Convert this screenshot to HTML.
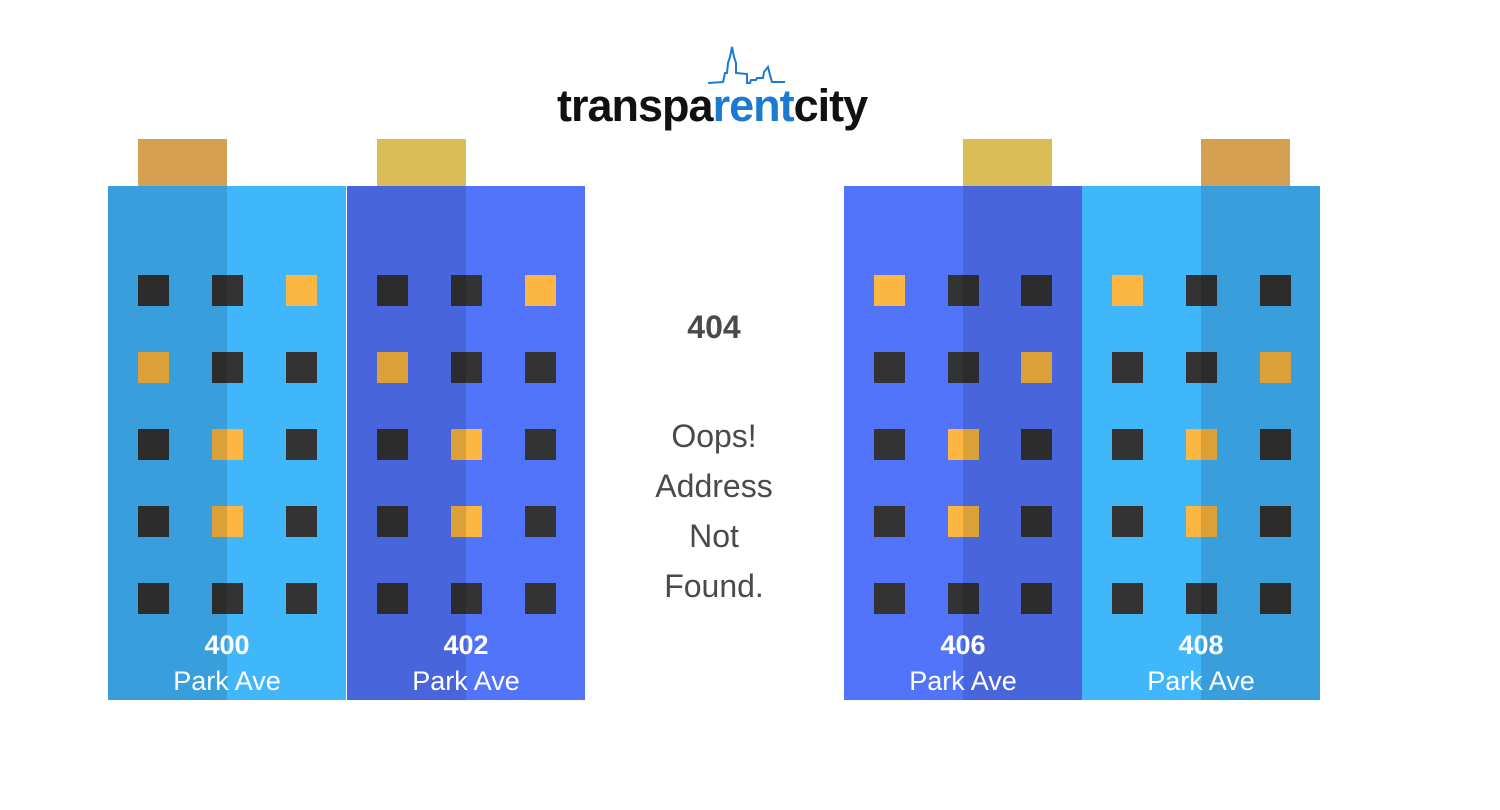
<!DOCTYPE html>
<html><head><meta charset="utf-8"><style>
*{margin:0;padding:0;box-sizing:border-box}
body{width:1500px;height:810px;background:#fff;position:relative;overflow:hidden;font-family:"Liberation Sans",sans-serif}
.b{position:absolute;top:186px;width:238px;height:514px}
.roof{position:absolute;top:139px;width:89px;height:47px}
.w{position:absolute;width:31px;height:31px;background:#333}
.y{background:#fbb741}
.sh{position:absolute;top:0;width:119px;height:514px;background:rgba(0,0,0,.12)}
.lab{position:absolute;left:0;width:238px;text-align:center;color:#fff}
.n{top:444px;font-size:27px;font-weight:bold}
.p{top:480px;font-size:27px}
.lt{background:#40b6fb}.bl{background:#5274fa}
.c{position:absolute;left:600px;width:228px;text-align:center;color:#4a4a4a;font-size:32px}
</style></head><body>
<div style="position:absolute;left:557px;top:80px;font-size:45px;font-weight:bold;letter-spacing:-1px;color:#111">transpa<span style="color:#1c7ad0">rent</span>city</div>
<svg style="position:absolute;left:700px;top:40px" width="90" height="50" viewBox="0 0 90 50"><path d="M8 43 L23 42 L25 33 L27 33 L28 23 L30 17 L32 7 L34 17 L36 23 L36 33 L47 34 L47 43 L50 43 L51 40 L56 40 L57 38 L63 38 L64 32 L68 27 L70 35 L72 42 L85 42" fill="none" stroke="#1c7ad0" stroke-width="2"/></svg>

<div class="roof" style="left:138px;background:#d6a052"></div>
<div class="roof" style="left:377px;background:#d8be55"></div>
<div class="roof" style="left:963px;background:#d8be55"></div>
<div class="roof" style="left:1201px;background:#d6a052"></div>

<div class="b lt" style="left:108px">
<div class="w" style="left:30px;top:89px"></div><div class="w" style="left:104px;top:89px"></div><div class="w y" style="left:178px;top:89px"></div>
<div class="w y" style="left:30px;top:166px"></div><div class="w" style="left:104px;top:166px"></div><div class="w" style="left:178px;top:166px"></div>
<div class="w" style="left:30px;top:243px"></div><div class="w y" style="left:104px;top:243px"></div><div class="w" style="left:178px;top:243px"></div>
<div class="w" style="left:30px;top:320px"></div><div class="w y" style="left:104px;top:320px"></div><div class="w" style="left:178px;top:320px"></div>
<div class="w" style="left:30px;top:397px"></div><div class="w" style="left:104px;top:397px"></div><div class="w" style="left:178px;top:397px"></div>
<div class="sh" style="left:0"></div>
<div class="lab n">400</div><div class="lab p">Park Ave</div>
</div>

<div class="b bl" style="left:347px">
<div class="w" style="left:30px;top:89px"></div><div class="w" style="left:104px;top:89px"></div><div class="w y" style="left:178px;top:89px"></div>
<div class="w y" style="left:30px;top:166px"></div><div class="w" style="left:104px;top:166px"></div><div class="w" style="left:178px;top:166px"></div>
<div class="w" style="left:30px;top:243px"></div><div class="w y" style="left:104px;top:243px"></div><div class="w" style="left:178px;top:243px"></div>
<div class="w" style="left:30px;top:320px"></div><div class="w y" style="left:104px;top:320px"></div><div class="w" style="left:178px;top:320px"></div>
<div class="w" style="left:30px;top:397px"></div><div class="w" style="left:104px;top:397px"></div><div class="w" style="left:178px;top:397px"></div>
<div class="sh" style="left:0"></div>
<div class="lab n">402</div><div class="lab p">Park Ave</div>
</div>

<div class="b bl" style="left:844px">
<div class="w y" style="left:30px;top:89px"></div><div class="w" style="left:104px;top:89px"></div><div class="w" style="left:177px;top:89px"></div>
<div class="w" style="left:30px;top:166px"></div><div class="w" style="left:104px;top:166px"></div><div class="w y" style="left:177px;top:166px"></div>
<div class="w" style="left:30px;top:243px"></div><div class="w y" style="left:104px;top:243px"></div><div class="w" style="left:177px;top:243px"></div>
<div class="w" style="left:30px;top:320px"></div><div class="w y" style="left:104px;top:320px"></div><div class="w" style="left:177px;top:320px"></div>
<div class="w" style="left:30px;top:397px"></div><div class="w" style="left:104px;top:397px"></div><div class="w" style="left:177px;top:397px"></div>
<div class="sh" style="left:119px"></div>
<div class="lab n">406</div><div class="lab p">Park Ave</div>
</div>

<div class="b lt" style="left:1082px">
<div class="w y" style="left:30px;top:89px"></div><div class="w" style="left:104px;top:89px"></div><div class="w" style="left:178px;top:89px"></div>
<div class="w" style="left:30px;top:166px"></div><div class="w" style="left:104px;top:166px"></div><div class="w y" style="left:178px;top:166px"></div>
<div class="w" style="left:30px;top:243px"></div><div class="w y" style="left:104px;top:243px"></div><div class="w" style="left:178px;top:243px"></div>
<div class="w" style="left:30px;top:320px"></div><div class="w y" style="left:104px;top:320px"></div><div class="w" style="left:178px;top:320px"></div>
<div class="w" style="left:30px;top:397px"></div><div class="w" style="left:104px;top:397px"></div><div class="w" style="left:178px;top:397px"></div>
<div class="sh" style="left:119px"></div>
<div class="lab n">408</div><div class="lab p">Park Ave</div>
</div>

<div class="c" style="top:309px;font-weight:bold">404</div>
<div class="c" style="top:411px;line-height:50px">Oops!<br>Address<br>Not<br>Found.</div>
</body></html>
